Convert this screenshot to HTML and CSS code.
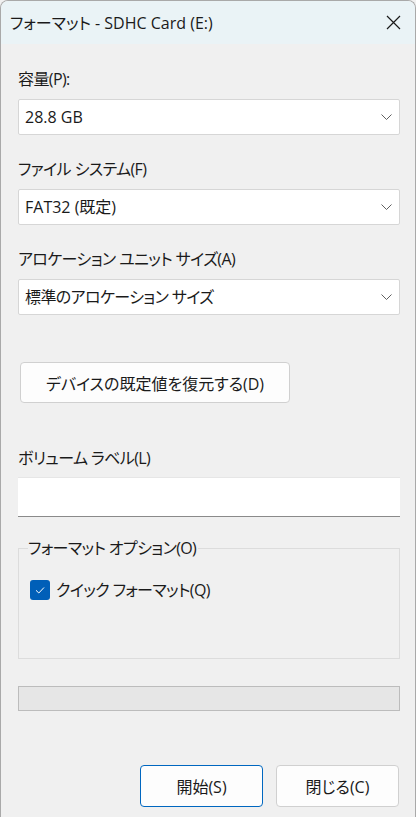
FILE: index.html
```html
<!DOCTYPE html>
<html lang="ja">
<head>
<meta charset="utf-8">
<title>フォーマット - SDHC Card (E:)</title>
<link rel="stylesheet" href="styles.css">
</head>
<body>
<div class="window">
  <div class="titlebar">
    <span class="title">フォーマット - SDHC Card (E:)</span>
    <span class="close">
      <svg width="15" height="15" viewBox="0 0 15 15"><path d="M1 1 L14 14 M14 1 L1 14" stroke="#1b1b1b" stroke-width="1.2" fill="none"/></svg>
    </span>
  </div>
  <div class="content">
    <div class="field">
      <div class="label">容量(P):</div>
      <div class="select"><span>28.8 GB</span><svg class="chev" width="11" height="7" viewBox="0 0 11 7"><path d="M0.5 0.5 L5.5 5.5 L10.5 0.5" stroke="#5f5f5f" stroke-width="1" fill="none"/></svg></div>
    </div>
    <div class="field">
      <div class="label">ファイル システム(F)</div>
      <div class="select"><span>FAT32 (既定)</span><svg class="chev" width="11" height="7" viewBox="0 0 11 7"><path d="M0.5 0.5 L5.5 5.5 L10.5 0.5" stroke="#5f5f5f" stroke-width="1" fill="none"/></svg></div>
    </div>
    <div class="field">
      <div class="label">アロケーション ユニット サイズ(A)</div>
      <div class="select"><span class="kana">標準のアロケーション サイズ</span><svg class="chev" width="11" height="7" viewBox="0 0 11 7"><path d="M0.5 0.5 L5.5 5.5 L10.5 0.5" stroke="#5f5f5f" stroke-width="1" fill="none"/></svg></div>
    </div>
    <div class="restore-row">
      <button class="btn restore">デバイスの既定値を復元する(D)</button>
    </div>
    <div class="field volume">
      <div class="label">ボリューム ラベル(L)</div>
      <div class="textbox"></div>
    </div>
    <fieldset class="group">
      <legend>フォーマット オプション(O)</legend>
      <div class="check-row">
        <span class="checkbox"><svg width="20" height="20" viewBox="0 0 20 20"><path d="M6 10.3 L8.8 13 L14 7.5" stroke="#ffffff" stroke-width="1" fill="none"/></svg></span>
        <span class="check-label">クイック フォーマット(Q)</span>
      </div>
    </fieldset>
    <div class="progress"></div>
    <div class="actions">
      <button class="btn primary">開始(S)</button>
      <button class="btn">閉じる(C)</button>
    </div>
  </div>
</div>
</body>
</html>
```
FILE: styles.css
```css
html, body {
  margin: 0;
  padding: 0;
  background: #f0f0f0;
}
body {
  font-family: "Open Sans", "Noto Sans CJK JP", sans-serif;
  font-size: 16px;
  font-feature-settings: "palt";
  color: #1a1a1a;
}
.window {
  height: 817px;
  box-sizing: border-box;
  border: 1px solid #a9a9a9;
  border-bottom: none;
  border-radius: 8px 8px 0 0;
  background: #f0f0f0;
  overflow: hidden;
}
.titlebar {
  height: 43px;
  background: #eaf3f6;
  display: flex;
  align-items: center;
  justify-content: space-between;
  padding: 0 14px 0 9px;
}
.title {
  font-size: 16px;
  line-height: 20px;
  color: #1a1a1a;
}
.close {
  display: flex;
  align-items: center;
}
.content {
  padding: 0 15px 0 17px;
}
.field {
  display: flex;
  flex-direction: column;
}
.label,
.kana,
.group legend,
.check-label {
  letter-spacing: -0.6px;
}
.label {
  line-height: 20px;
  margin-top: 24px;
  margin-bottom: 10px;
}
.field:first-child .label {
  margin-top: 25px;
}
.select {
  height: 36px;
  box-sizing: border-box;
  background: #ffffff;
  border: 1px solid #d6d6d6;
  border-radius: 2px;
  display: flex;
  align-items: center;
  justify-content: space-between;
  padding: 0 7px 0 6px;
}
.select span {
  line-height: 20px;
}
.chev {
  display: block;
}
.restore-row {
  margin-top: 47px;
  display: flex;
}
.btn {
  font-family: "Open Sans", "Noto Sans CJK JP", sans-serif;
  font-size: 16px;
  font-feature-settings: "palt";
  color: #1a1a1a;
  background: #fdfdfd;
  border: 1px solid #d0d0d0;
  border-radius: 4px;
  height: 42px;
  padding: 0;
  margin: 0;
}
.restore {
  margin-left: 2px;
  width: 270px;
  height: 41px;
}
.volume .label {
  margin-top: 45px;
  margin-bottom: 9px;
}
.textbox {
  height: 40px;
  box-sizing: border-box;
  background: #ffffff;
  border-top: 1px solid #e6e6e6;
  border-bottom: 1px solid #8a8a8a;
}
.group {
  margin: 21px 0 0 0;
  padding: 0 0 0 11px;
  border: 1px solid #dcdcdc;
  height: 121px;
  box-sizing: border-box;
}
.group legend {
  padding: 0 2px 0 0;
  margin-left: -2px;
  line-height: 20px;
}
.check-row {
  margin-top: 22px;
  display: flex;
  align-items: center;
  gap: 6px;
}
.checkbox {
  width: 20px;
  height: 20px;
  border-radius: 3px;
  background: #005fb8;
  display: block;
}
.checkbox svg {
  display: block;
}
.check-label {
  line-height: 20px;
}
.progress {
  margin-top: 27px;
  height: 25px;
  box-sizing: border-box;
  background: #e6e6e6;
  border: 1px solid #bcbcbc;
}
.actions {
  margin-top: 54px;
  display: flex;
  justify-content: flex-end;
  gap: 13px;
  padding-right: 1px;
}
.actions .btn {
  width: 123px;
}
.btn.primary {
  border-color: #0067c0;
}
```
